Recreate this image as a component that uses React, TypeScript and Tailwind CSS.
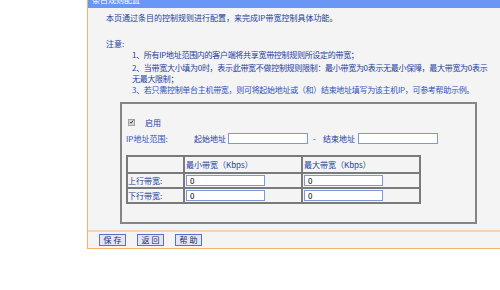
import React from "react";

const font = { fontFamily: '"Noto Sans CJK SC", "Noto Sans", sans-serif' };

function Input({ w, value = "" }: { w: string; value?: string }) {
  return (
    <div className={`${w} h-[11px] bg-white border border-[#7f97dc] text-[8px] leading-[9px] pl-[3px] text-black`}>
      {value}
    </div>
  );
}

function Btn({ label }: { label: string }) {
  return (
    <div className="w-[27px] h-[12px] border border-[#5a6ecf] bg-[#e3e6f7] text-[8px] leading-[10px] text-[#1c2a6a] flex items-center justify-center tracking-[2px] pl-[2px]">
      {label}
    </div>
  );
}

export default function App() {
  return (
    <div className="w-[500px] h-[290px] bg-white overflow-hidden" style={font}>
      <div className="ml-[87px] w-[413px] h-[249px] border-l border-b border-[#f6b26b] flex flex-col">
        <div className="h-[8px] bg-[#6a96f6] overflow-hidden pl-[4px]">
          <div className="text-white text-[8px] leading-[8px] -mt-[4px]">条目规则配置</div>
        </div>
        <div className="h-[222px] bg-[#f4f4f4] flex flex-col text-[8px] leading-[11px] text-[#23409e]">
          <div className="pl-[18px] pt-[4px] whitespace-nowrap">
            本页通过条目的控制规则进行配置，来完成IP带宽控制具体功能。
          </div>
          <div className="pl-[18px] mt-[15px] whitespace-nowrap">注意:</div>
          <div className="pl-[44px] flex flex-col whitespace-nowrap tracking-[-0.3px]">
            <div>1、所有IP地址范围内的客户端将共享宽带控制规则所设定的带宽；</div>
            <div className="mt-[2px]">
              2、当带宽大小填为0时，表示此带宽不做控制规则限制：最小带宽为0表示无最小保障，最大带宽为0表示
              <br />
              无最大限制；
            </div>
            <div className="text-[#2e52c0]">
              3、若只需控制单台主机带宽，则可将起始地址或（和）结束地址填写为该主机IP，可参考帮助示例。
            </div>
          </div>
          <div className="ml-[32px] mt-[7px] w-[357px] h-[122px] border-2 border-[#858585] flex flex-col">
            <div className="pl-[6px] pt-[12px] h-[24px] flex items-start">
              <div className="h-[12px] flex items-center">
                <div className="w-[7px] h-[7px] bg-[#d9d9d9] border border-[#a0a0a0] flex items-center justify-center">
                  <svg width="6" height="6" viewBox="0 0 6 6">
                    <path d="M1 3 L2.5 4.5 L5 1.2" stroke="#333" strokeWidth="1.2" fill="none" />
                  </svg>
                </div>
                <span className="ml-[10px]">启用</span>
              </div>
            </div>
            <div className="pl-[4px] mt-[4px] h-[12px] flex items-center whitespace-nowrap">
              <span className="w-[68px] text-[#2e52c0]">IP地址范围:</span>
              <span className="w-[34px]">起始地址</span>
              <Input w="w-[80px]" />
              <span className="ml-[5px] w-[10px]">-</span>
              <span className="w-[35px]">结束地址</span>
              <Input w="w-[80px]" />
            </div>
            <div className="ml-[4px] mt-[11px] w-[295px] p-[2px] bg-[#7a7a7a] grid grid-cols-[55px_116px_116px] grid-rows-[15px_13px_13px] gap-[2px]">
              <div className="bg-[#f4f4f4]" />
              <div className="bg-[#f4f4f4] pl-[1px] flex items-center">最小带宽（Kbps）</div>
              <div className="bg-[#f4f4f4] pl-[1px] flex items-center">最大带宽（Kbps）</div>
              <div className="bg-[#f4f4f4] flex items-center">上行带宽:</div>
              <div className="bg-[#f4f4f4] flex items-center pl-[1px]">
                <Input w="w-[79px]" value="0" />
              </div>
              <div className="bg-[#f4f4f4] flex items-center pl-[1px]">
                <Input w="w-[79px]" value="0" />
              </div>
              <div className="bg-[#f4f4f4] flex items-center">下行带宽:</div>
              <div className="bg-[#f4f4f4] flex items-center pl-[1px]">
                <Input w="w-[79px]" value="0" />
              </div>
              <div className="bg-[#f4f4f4] flex items-center pl-[1px]">
                <Input w="w-[79px]" value="0" />
              </div>
            </div>
          </div>
        </div>
        <div className="h-[2px] bg-[#f6d3b2]" />
        <div className="flex-1 bg-[#f4f4f4] pl-[11px] pt-[2px] flex gap-[11px]">
          <Btn label="保存" />
          <Btn label="返回" />
          <Btn label="帮助" />
        </div>
      </div>
    </div>
  );
}
